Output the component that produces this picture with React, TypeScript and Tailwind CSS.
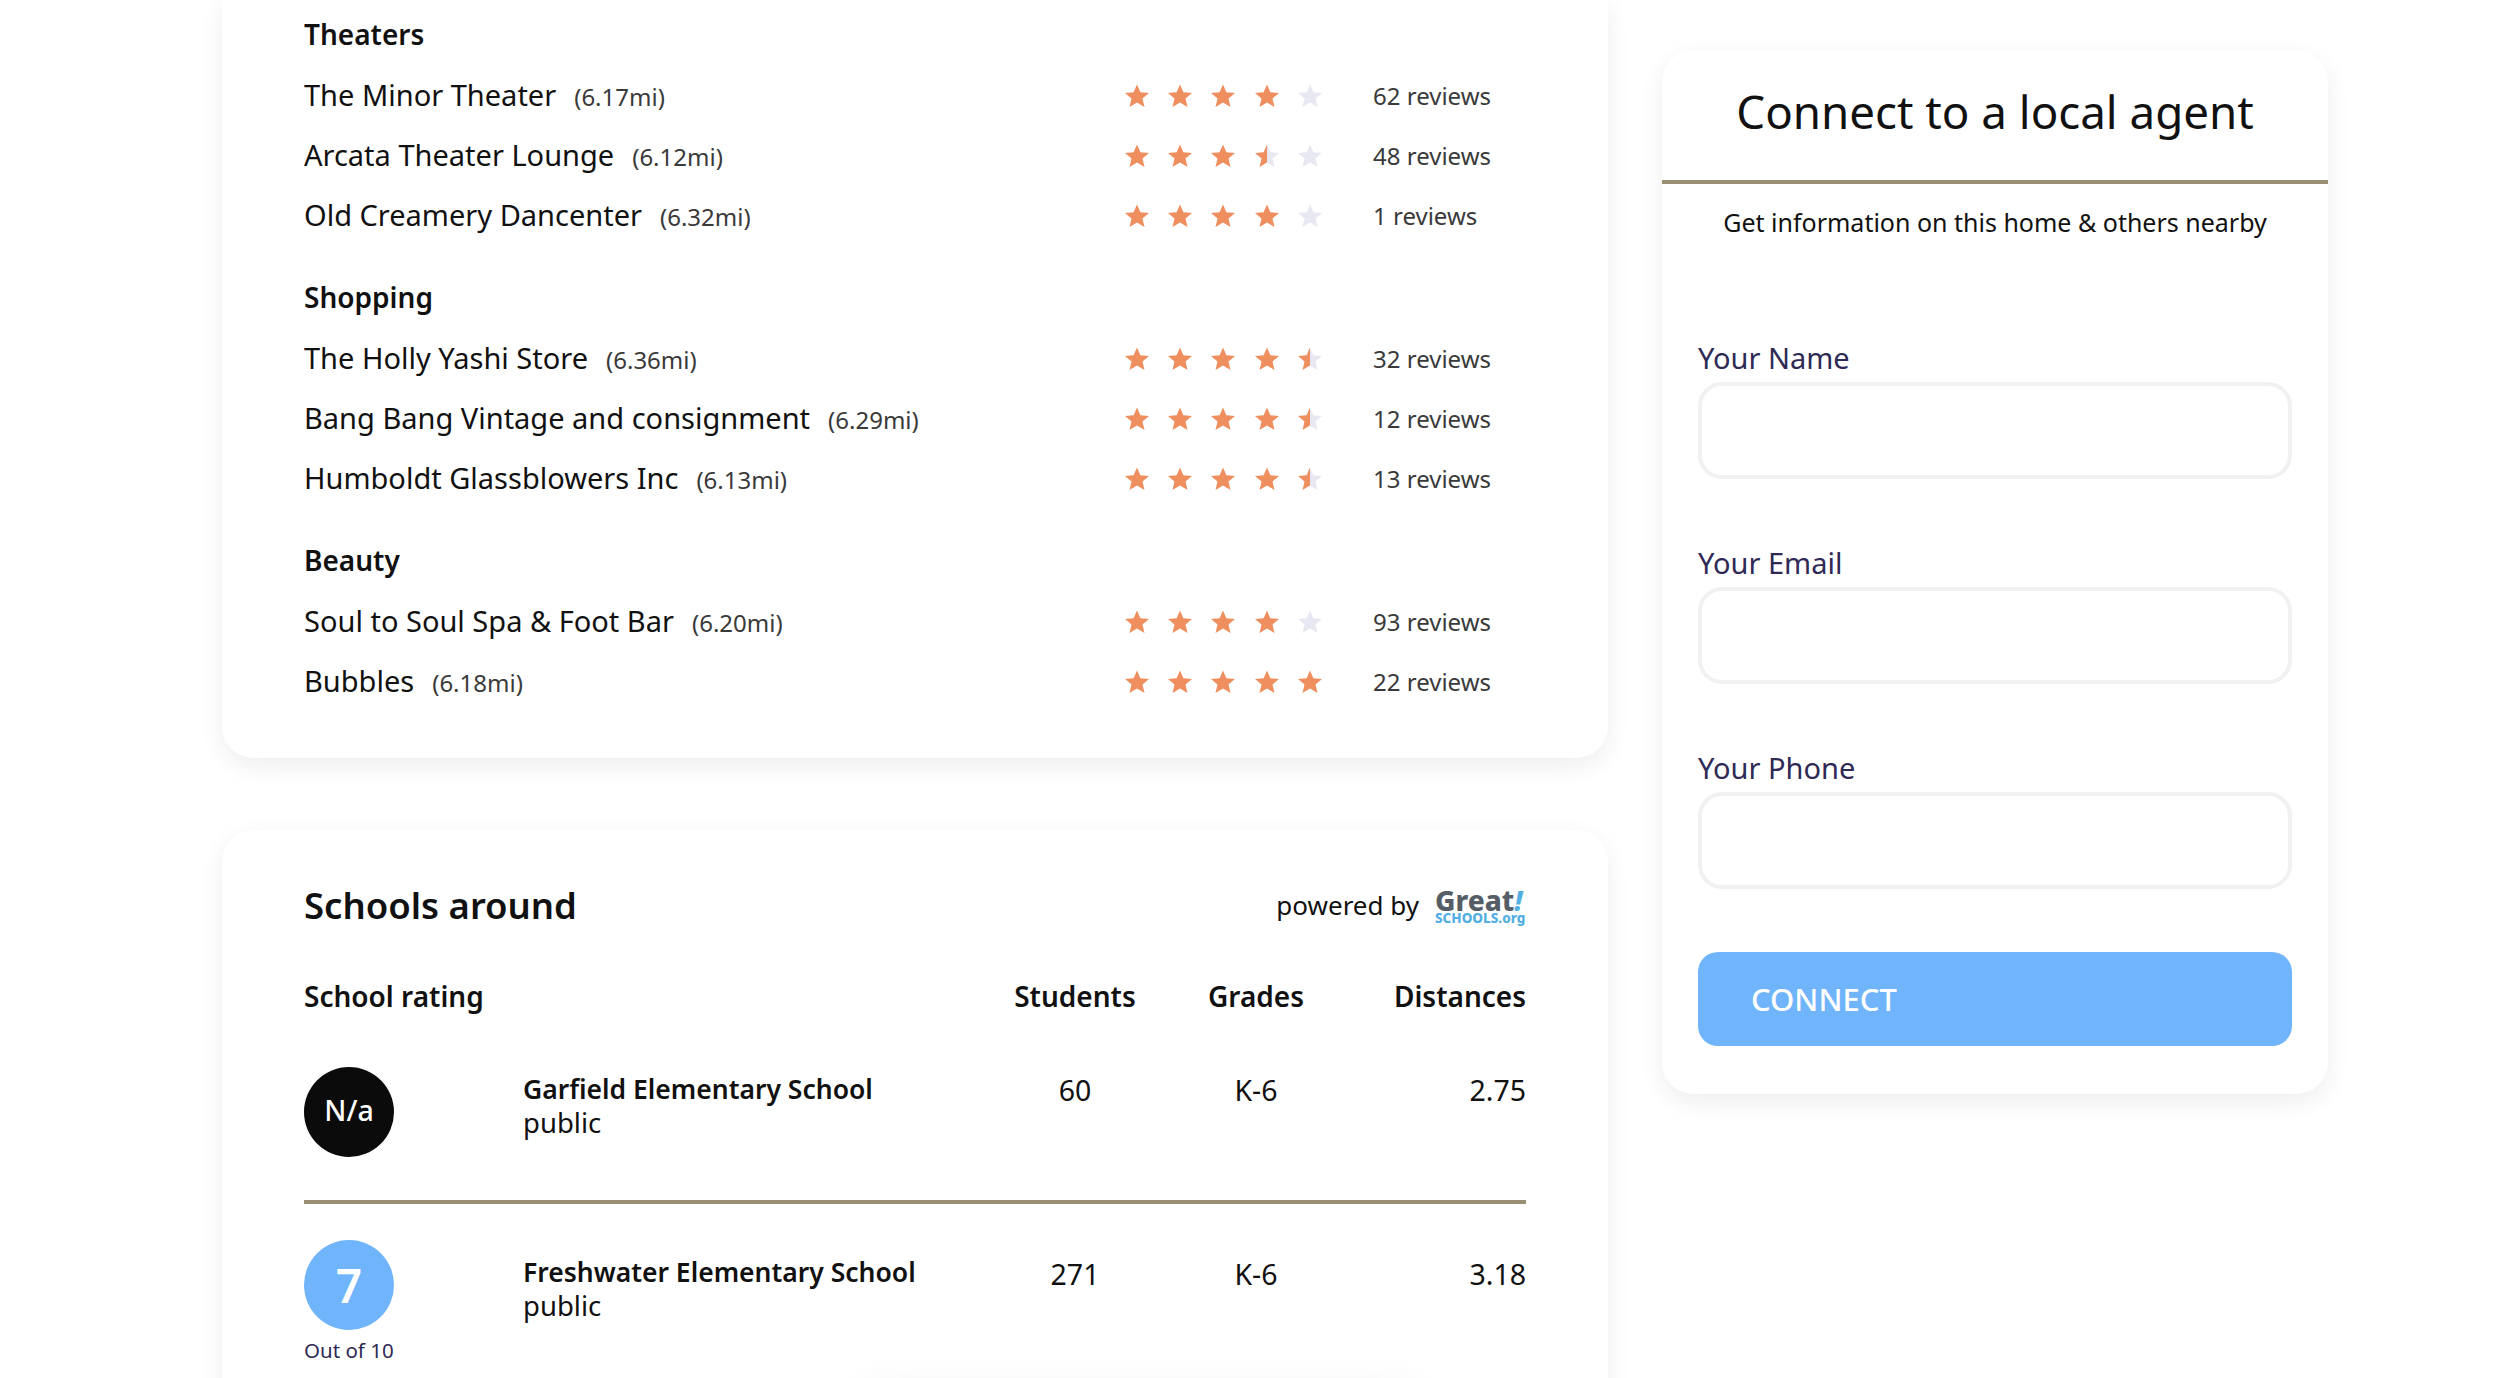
const STAR_POINTS = '12,0.5 15.4,8.2 24,9 17.5,14.6 19.5,23 12,18.6 4.5,23 6.5,14.6 0,9 8.6,8.2'

const groups = [
  {
    title: 'Theaters',
    items: [
      { name: 'The Minor Theater', dist: '6.17mi', rating: 4, reviews: 62 },
      { name: 'Arcata Theater Lounge', dist: '6.12mi', rating: 3.5, reviews: 48 },
      { name: 'Old Creamery Dancenter', dist: '6.32mi', rating: 4, reviews: 1 },
    ],
  },
  {
    title: 'Shopping',
    items: [
      { name: 'The Holly Yashi Store', dist: '6.36mi', rating: 4.5, reviews: 32 },
      { name: 'Bang Bang Vintage and consignment', dist: '6.29mi', rating: 4.5, reviews: 12 },
      { name: 'Humboldt Glassblowers Inc', dist: '6.13mi', rating: 4.5, reviews: 13 },
    ],
  },
  {
    title: 'Beauty',
    items: [
      { name: 'Soul to Soul Spa & Foot Bar', dist: '6.20mi', rating: 4, reviews: 93 },
      { name: 'Bubbles', dist: '6.18mi', rating: 5, reviews: 22 },
    ],
  },
]

function Star({ fill, id }: { fill: number; id: string }) {
  if (fill === 0.5) {
    return (
      <svg viewBox="0 0 24 24" className="w-6 h-6 shrink-0">
        <defs>
          <linearGradient id={id}>
            <stop offset="50%" stopColor="#ef8f5f" />
            <stop offset="50%" stopColor="#e8e8f2" />
          </linearGradient>
        </defs>
        <polygon points={STAR_POINTS} fill={`url(#${id})`} />
      </svg>
    )
  }
  return (
    <svg viewBox="0 0 24 24" className="w-6 h-6 shrink-0">
      <polygon points={STAR_POINTS} fill={fill === 1 ? '#ef8f5f' : '#e8e8f2'} />
    </svg>
  )
}

function Stars({ rating, id }: { rating: number; id: string }) {
  return (
    <div className="flex gap-[19.2px]">
      {[0, 1, 2, 3, 4].map((i) => (
        <Star key={i} id={`${id}-${i}`} fill={rating >= i + 1 ? 1 : rating >= i + 0.5 ? 0.5 : 0} />
      ))}
    </div>
  )
}

function Field({ label, className }: { label: string; className: string }) {
  return (
    <div className={className}>
      <label className="block h-[27px] text-[29px] leading-[27px] text-[#2f2a55]">{label}</label>
      <input className="mt-[11px] block w-full h-[97px] rounded-[24px] border-4 border-[#f1f1f3] bg-white" />
    </div>
  )
}

function SchoolRow({ badge, badgeClass, name, students, distance, outOf, textClass, numClass }: {
  badge: string
  badgeClass: string
  name: string
  students: string
  distance: string
  outOf?: boolean
  textClass: string
  numClass: string
}) {
  return (
    <div className="grid grid-cols-[219px_452px_200px_162px_1fr] text-[28.5px] text-[#111]">
      <div>
        <div className={`w-[90px] h-[90px] rounded-full flex items-center justify-center font-medium text-white ${badgeClass}`}>
          {badge}
        </div>
        {outOf && <div className="w-[90px] mt-[10px] text-[20.5px] leading-[20px] whitespace-nowrap text-[#2f2a55]">Out of 10</div>}
      </div>
      <div className={`leading-[34px] ${textClass}`}>
        <div className="font-semibold text-[26.5px] whitespace-nowrap">{name}</div>
        <div className="text-[27.5px]">public</div>
      </div>
      <div className={`leading-[34px] text-center ${numClass}`}>{students}</div>
      <div className={`leading-[34px] text-center ${numClass}`}>K-6</div>
      <div className={`leading-[34px] text-right ${numClass}`}>{distance}</div>
    </div>
  )
}

export default function App() {
  return (
    <div className="relative h-[1378px] overflow-hidden bg-white font-['Noto_Sans',sans-serif] text-[#111]">
      <div className="flex items-start gap-[54px] pl-[222px]">
        {/* Left column */}
        <div className="w-[1386px] shrink-0">
          <div className="bg-white rounded-b-[32px] shadow-[0_8px_24px_rgba(0,0,0,0.07)] pl-[82px] pr-[83px] pt-[15px] h-[758px]">
            {groups.map((group, g) => (
              <div key={group.title} className={g === 0 ? '' : 'mt-[32px]'}>
                <h3 className="h-[38px] text-[28px] leading-[38px] font-semibold">{group.title}</h3>
                <div className="mt-[13px]">
                  {group.items.map((item, r) => (
                    <div key={item.name} className="grid grid-cols-[821px_248px_1fr] items-center h-[60px] leading-[40px]">
                      <div className="flex items-baseline gap-[18px] whitespace-nowrap">
                        <span className="text-[29px]">{item.name}</span>
                        <span className="text-[24px] text-[#3a3a3a]">({item.dist})</span>
                      </div>
                      <Stars rating={item.rating} id={`star-${g}-${r}`} />
                      <span className="text-[24px] text-[#3a3a3a] whitespace-nowrap">{item.reviews} reviews</span>
                    </div>
                  ))}
                </div>
              </div>
            ))}
          </div>

          <div className="mt-[72px] bg-white rounded-t-[32px] shadow-[0_8px_24px_rgba(0,0,0,0.07)] pl-[82px] pr-[82px] pt-[50px] h-[700px]">
            <div className="flex items-center justify-between h-[50px]">
              <h2 className="text-[36.5px] leading-[50px] font-semibold">Schools around</h2>
              <div className="flex items-center gap-[16px]">
                <span className="text-[26px] text-[#111]">powered by</span>
                <div className="w-[91px] pt-[2px]">
                  <div className="text-[28px] leading-[24px] font-extrabold text-[#555d66] whitespace-nowrap">
                    Great<span className="italic text-[#53aee2]">!</span>
                  </div>
                  <div className="text-[13.5px] leading-[13px] font-extrabold text-[#53aee2] whitespace-nowrap">SCHOOLS.org</div>
                </div>
              </div>
            </div>

            <div className="grid grid-cols-[671px_200px_162px_1fr] mt-[48px] text-[28px] leading-[36px] font-semibold">
              <div>School rating</div>
              <div className="text-center">Students</div>
              <div className="text-center">Grades</div>
              <div className="text-right">Distances</div>
            </div>

            <div className="mt-[53px]">
              <SchoolRow badge="N/a" badgeClass="bg-[#0b0b0b] pb-[4px]" name="Garfield Elementary School" students="60" distance="2.75" textClass="pt-[5px]" numClass="pt-[6px]" />
            </div>
            <div className="h-1 bg-[#998f72] mt-[43px]" />
            <div className="mt-[36px]">
              <SchoolRow badge="7" badgeClass="bg-[#70b4fb] text-[46px] font-semibold" name="Freshwater Elementary School" students="271" distance="3.18" textClass="pt-[15px]" numClass="pt-[17px]" outOf />
            </div>
          </div>
        </div>

        {/* Contact card */}
        <div className="w-[666px] shrink-0 mt-[50px] h-[1044px] bg-white rounded-[32px] shadow-[0_8px_24px_rgba(0,0,0,0.07)]">
          <h2 className="h-[134px] pt-[30px] text-center text-[45.7px] leading-[62px] text-[#111] border-b-[4px] border-[#998f72]">
            Connect to a local agent
          </h2>
          <p className="mt-[21px] text-center text-[25px] leading-[34px] text-[#111]">
            Get information on this home &amp; others nearby
          </p>
          <div className="px-[36px]">
            <Field label="Your Name" className="mt-[105px]" />
            <Field label="Your Email" className="mt-[70px]" />
            <Field label="Your Phone" className="mt-[70px]" />
            <button className="mt-[63px] block w-full h-[94px] rounded-[20px] bg-[#70b4fb] px-[53px] text-left text-[31px] font-medium text-white">
              CONNECT
            </button>
          </div>
        </div>
      </div>

      {/* floating bar, only its shadow shows at the bottom edge */}
      <div className="absolute left-[860px] top-[1395px] w-[560px] h-[80px] rounded-[24px] bg-white shadow-[0_0_50px_rgba(0,0,0,0.07)]" />
    </div>
  )
}
